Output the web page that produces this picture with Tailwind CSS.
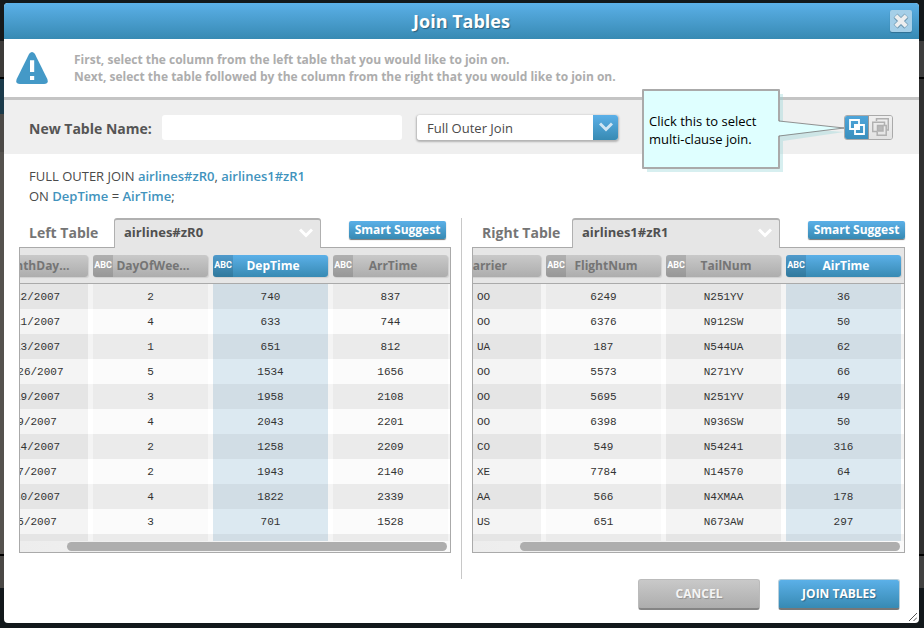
<!DOCTYPE html>
<html lang="en">
<head>
<meta charset="utf-8">
<title>Join Tables</title>
<script src="https://cdn.jsdelivr.net/npm/@tailwindcss/browser@4"></script>
</head>
<body class="grid min-h-screen grid-cols-[4px_1fr_5px] bg-[#12181b] font-['Open_Sans','Noto_Sans',sans-serif] text-[13px] text-[#555]">

<div class="flex flex-col" aria-hidden="true">
  <div class="h-[41px] bg-[#16191a]"></div>
  <div class="h-9 bg-[#3d3b39]"></div>
  <div class="h-0.5 bg-black"></div>
  <div class="h-[35px] bg-[#1b3a4a]"></div>
  <div class="h-[38px] bg-[#4b4946]"></div>
  <div class="flex-1 bg-[#55524e]"></div>
  <div class="h-0.5 bg-black"></div>
  <div class="h-8 bg-[#4a4845]"></div>
  <div class="h-10 bg-[#12181b]"></div>
</div>

<main class="flex min-w-0 flex-col pt-[3px] pb-[5px]">
<section role="dialog" aria-labelledby="title" class="relative flex flex-1 flex-col rounded bg-white">

  <header class="flex h-9 items-center rounded-t bg-linear-to-b from-[#5bb0e8] to-[#378ab3] pr-[7px] pl-[29px]">
    <h1 id="title" class="flex-1 text-center text-lg font-bold text-white [text-shadow:1px_1px_1px_rgba(0,0,0,0.35)]">Join Tables</h1>
    <button type="button" aria-label="Close" class="flex size-[22px] items-center justify-center rounded-xs bg-[#a5cfe8] shadow-[0_1px_1px_#2f6f92]">
      <svg class="size-4" viewBox="1 1 14 14" fill="none"><path d="M3.600 4.200l8.800 8.800M12.400 4.200l-8.800 8.800" stroke="#5c8aa5" stroke-width="4.600"/><path d="M3.200 3.200l9.600 9.600M12.800 3.200l-9.600 9.600" stroke="#7fa6bd" stroke-width="5"/><path d="M3.500 3.500l9 9M12.500 3.500l-9 9" stroke="#eceeef" stroke-width="3.600"/></svg>
    </button>
  </header>

  <div class="flex h-[61px] items-center gap-[26px] border-b-[3px] border-[#c4c4c4] pl-3">
    <svg class="h-8 w-8" viewBox="0 0 32 32"><path d="M13.2 1.8Q16-1.6 18.8 1.8L31.3 27Q33 32 28 32H4Q-1 32 .7 27Z" fill="#4499c7"/><path d="M14 8.300h4.200v11.700H14zM14 24h4.200v4H14z" fill="#fff"/></svg>
    <p class="text-xs leading-[17px] font-bold text-[#adadad]">First, select the column from the left table that you would like to join on.<br>Next, select the table followed by the column from the right that you would like to join on.</p>
  </div>

  <form class="flex h-[54px] items-center bg-[#efefef] pr-[26px] pl-[25px]">
    <label for="name" class="w-[133px] pt-1 text-sm font-bold whitespace-nowrap">New Table Name:</label>
    <input id="name" type="text" class="h-[25px] w-60 rounded-[3px] bg-white px-2 outline-none">
    <div class="relative ml-[15px] h-[25px] w-[201px] overflow-hidden rounded-[3px] shadow-[0_1px_2px_1px_rgba(0,0,0,0.25)]">
      <select aria-label="Join type" class="h-full w-full appearance-none bg-white pt-1 pl-2.5 text-[13px] font-medium text-[#4a4a4a] outline-none"><option>Full Outer Join</option></select>
      <span class="pointer-events-none absolute inset-y-0 right-0 flex w-[25px] items-center justify-center bg-linear-to-b from-[#5bb0e8] to-[#378ab3]">
        <svg class="h-2.5 w-3.5" viewBox="0 0 14 10" fill="none" stroke="#cfe5f3" stroke-width="3"><path d="M1 1.500l6 6 6-6"/></svg>
      </span>
    </div>
    <div class="ml-auto flex h-[25px] overflow-hidden rounded-[3px] border border-[#aaa]">
      <button type="button" aria-label="Single join" class="flex w-6 items-center justify-center border-r border-[#999] bg-linear-to-b from-[#4ea5da] to-[#3a8fbd]">
        <svg class="size-4" viewBox="0 0 16 16" fill="none" stroke="#fff" stroke-width="1.800"><path d="M1 1h9v9H1zM6 6h9v9H6z"/><path d="M6 6h4v4H6z" fill="#fff"/></svg>
      </button>
      <button type="button" aria-label="Multi-clause join" class="flex w-[23px] items-center justify-center bg-linear-to-b from-[#f0f0f0] to-[#e2e2e2]">
        <svg class="h-[18px] w-[17px]" viewBox="0 0 17 18" fill="none" stroke="#b0b0b0" stroke-width="1.500"><path d="M4.500 3V.7h11.800V12h-2"/><path d="M5 13.500H.7V4.200h11.800V7"/><path d="M5.200 13.500v3.700h9V7.500h-3"/><path d="M5.500 7.500h5.500v5.500H5.500z" fill="#b8b8b8"/></svg>
      </button>
    </div>
  </form>

  <p class="px-[25px] pt-3 text-[13px] leading-5 font-medium text-[#4a4a4a]">FULL OUTER JOIN <span class="font-semibold text-[#4193bd]">airlines#zR0</span>, <span class="font-semibold text-[#4193bd]">airlines1#zR1</span><br>ON <span class="font-semibold text-[#4193bd]">DepTime</span> = <span class="font-semibold text-[#4193bd]">AirTime</span>;</p>

  <div class="mt-3 flex pr-3.5 pl-[15px]">
    <section class="min-w-0 flex-[432]">
      <div class="relative z-10 -mb-px flex h-[30px]">
        <label for="left" class="w-[95px] pt-[5px] pl-2.5 text-sm font-bold whitespace-nowrap text-[#757575]">Left Table</label>
        <div class="relative w-[207px]">
          <select id="left" class="h-full w-full appearance-none rounded-t-[3px] border border-t-2 border-b-0 border-[#b0b0b0] bg-[#e6e6e6] pb-0.5 pl-[9px] text-[13px] font-bold text-[#505050] outline-none"><option>airlines#zR0</option></select>
          <svg class="pointer-events-none absolute top-2.5 right-2 h-2.5 w-3.5" viewBox="0 0 14 10" fill="none" stroke="#fff" stroke-width="3"><path d="M1 1.500l6 6 6-6"/></svg>
        </div>
        <button type="button" class="mt-[3px] ml-7 h-[18px] w-[97px] rounded-xs bg-linear-to-b from-[#5bb0e8] to-[#378ab3] text-xs leading-[18px] font-bold whitespace-nowrap text-white shadow-[0_1px_1px_#777]">Smart Suggest</button>
      </div>
      <div class="border border-[#aaa]">
        <div class="h-[293px] overflow-hidden"><table id="leftData" class="-ml-[47px] w-[480px] table-fixed border-separate border-spacing-0"></table></div>
        <div class="flex h-[11px] justify-end bg-linear-to-r from-[#ededed] to-[#fafafa] py-px pr-[3px]"><div class="w-[380px] rounded-full bg-[#aeaeae]"></div></div>
      </div>
    </section>

    <div class="ml-2.5 -mb-[26px] w-px bg-[#c8c8c8]"></div>

    <section class="ml-2.5 min-w-0 flex-[433]">
      <div class="relative z-10 -mb-px flex h-[30px]">
        <label for="right" class="w-[100px] pt-[5px] pl-2.5 text-sm font-bold whitespace-nowrap text-[#757575]">Right Table</label>
        <div class="relative w-[208px]">
          <select id="right" class="h-full w-full appearance-none rounded-t-[3px] border border-t-2 border-b-0 border-[#b0b0b0] bg-[#e6e6e6] pb-0.5 pl-[9px] text-[13px] font-bold text-[#505050] outline-none"><option>airlines1#zR1</option></select>
          <svg class="pointer-events-none absolute top-2.5 right-2 h-2.5 w-3.5" viewBox="0 0 14 10" fill="none" stroke="#fff" stroke-width="3"><path d="M1 1.500l6 6 6-6"/></svg>
        </div>
        <button type="button" class="mt-[3px] ml-7 h-[18px] w-[97px] rounded-xs bg-linear-to-b from-[#5bb0e8] to-[#378ab3] text-xs leading-[18px] font-bold whitespace-nowrap text-white shadow-[0_1px_1px_#777]">Smart Suggest</button>
      </div>
      <div class="border border-[#aaa]">
        <div class="h-[293px] overflow-hidden"><table id="rightData" class="-ml-[47px] w-[480px] table-fixed border-separate border-spacing-0"></table></div>
        <div class="flex h-[11px] justify-end bg-linear-to-r from-[#ededed] to-[#fafafa] py-px pr-1"><div class="w-[380px] rounded-full bg-[#aeaeae]"></div></div>
      </div>
    </section>
  </div>

  <footer class="mt-[26px] flex justify-end gap-[18px] pr-[19px] pb-[13px]">
    <button type="button" class="h-[31px] w-[122px] rounded-[3px] border border-b-2 border-[#bbb] border-b-[#858585] bg-linear-to-b from-[#c9c9c9] to-[#adadad] text-xs font-bold text-[#f4f4f4] [text-shadow:1px_1px_1px_rgba(0,0,0,0.2)]">CANCEL</button>
    <button type="button" class="h-[31px] w-[122px] rounded-[3px] border border-b-2 border-[#b9cfdb] border-b-[#777] bg-linear-to-b from-[#5bb0e8] to-[#378ab3] text-xs font-bold text-white [text-shadow:1px_1px_1px_rgba(0,0,0,0.3)]">JOIN TABLES</button>
  </footer>

  <svg class="absolute right-0.5 bottom-0.5 size-2" viewBox="0 0 8 8" stroke="#555"><path d="M0 8l8-8M4.500 8L8 4.500"/></svg>

  <!-- Help callout with a pointer towards the join mode buttons -->
  <div role="tooltip" class="absolute top-[86px] right-[75px] h-[84px] w-[202px]">
    <svg class="absolute inset-0 h-full w-full" viewBox="0 0 202 84">
      <path d="M5 5h136v33l61 5-61 9v31H5z" fill="#9bd8da" fill-opacity=".4"/>
      <path d="M1 1h136v78H1z" fill="#dfffff" stroke="#aaa" stroke-width="2" stroke-linejoin="round"/>
      <path d="M135 32l67 7-67 8z" fill="#dfffff"/>
      <path d="M137 32l65 7-65 8" fill="none" stroke="#777" stroke-width=".8"/>
    </svg>
    <p class="relative px-[7px] pt-[23px] text-[13px] leading-[18px] text-black">Click this to select<br>multi-clause join.</p>
  </div>
</section>
</main>

<div class="flex flex-col" aria-hidden="true">
  <div class="h-[41px] bg-[#12181a]"></div>
  <div class="h-9 bg-[#3d3d3d]"></div>
  <div class="h-0.5 bg-black"></div>
  <div class="flex-1 bg-[#303030]"></div>
  <div class="h-0.5 bg-black"></div>
  <div class="h-8 bg-[#414141]"></div>
  <div class="h-10 bg-[#12181b]"></div>
</div>

<script>
const left = {
  heads: ['MonthDay…', 'DayOfWee…', 'DepTime', 'ArrTime'], active: 2,
  rows: [['1/22/2007',2,740,837],['1/11/2007',4,633,744],['1/13/2007',1,651,812],['10/26/2007',5,1534,1656],['1/19/2007',3,1958,2108],['1/9/2007',4,2043,2201],['1/14/2007',2,1258,2209],['1/7/2007',2,1943,2140],['1/30/2007',4,1822,2339],['1/5/2007',3,701,1528],['','','','']]
};
const right = {
  heads: ['Carrier', 'FlightNum', 'TailNum', 'AirTime'], active: 3,
  rows: [['OO',6249,'N251YV',36],['OO',6376,'N912SW',50],['UA',187,'N544UA',62],['OO',5573,'N271YV',66],['OO',5695,'N251YV',49],['OO',6398,'N936SW',50],['CO',549,'N54241',316],['XE',7784,'N14570',64],['AA',566,'N4XMAA',178],['US',651,'N673AW',297],['','','','']]
};
const shades = {
  active: ['bg-[#d1dde5]', 'bg-[#dce9f1]'],
  plain: ['bg-[#ebebeb]', 'bg-[#fbfbfb]'],
  dark: ['bg-[#e5e5e5]', 'bg-[#f4f4f4]']
};
const gaps = ['border-[#f4f4f4]', 'border-white'];
function build(id, data) {
  const head = data.heads.map((h, i) => {
    const on = i === data.active;
    return `<th class="h-9 w-[120px] border-b border-[#aaa] p-0 pr-[5px] align-middle"><div class="flex h-[22px] items-center overflow-hidden rounded-[3px] shadow-[1px_1px_1px_#d0d0d0] ${on ? 'bg-linear-to-b from-[#5bb0e8] to-[#378ab3] text-white' : 'bg-linear-to-b from-[#c9c9c9] to-[#adadad] text-[#757575]'}"><span class="flex h-full w-5 items-center justify-center bg-black/12 font-['Roboto',sans-serif] text-[9px] font-bold text-white">ABC</span><span class="flex-1 pr-[15px] text-center text-xs font-bold">${h}</span></div></th>`;
  }).join('');
  const body = data.rows.map((r, n) => '<tr class="h-[25px]">' + r.map((c, i) => {
    const kind = i === data.active ? 'active' : i % 2 ? 'plain' : 'dark';
    return `<td class="h-[25px] border-r-[5px] p-0 text-center ${gaps[n % 2]} ${shades[kind][n % 2]}">${c}</td>`;
  }).join('') + '</tr>').join('');
  document.getElementById(id).innerHTML = `<thead class="bg-[#e6e6e6]"><tr>${head}</tr></thead><tbody class="font-['Liberation_Mono',monospace] text-[11px] leading-4 text-[#333]">${body}</tbody>`;
}
build('leftData', left);
build('rightData', right);
</script>
</body>
</html>
